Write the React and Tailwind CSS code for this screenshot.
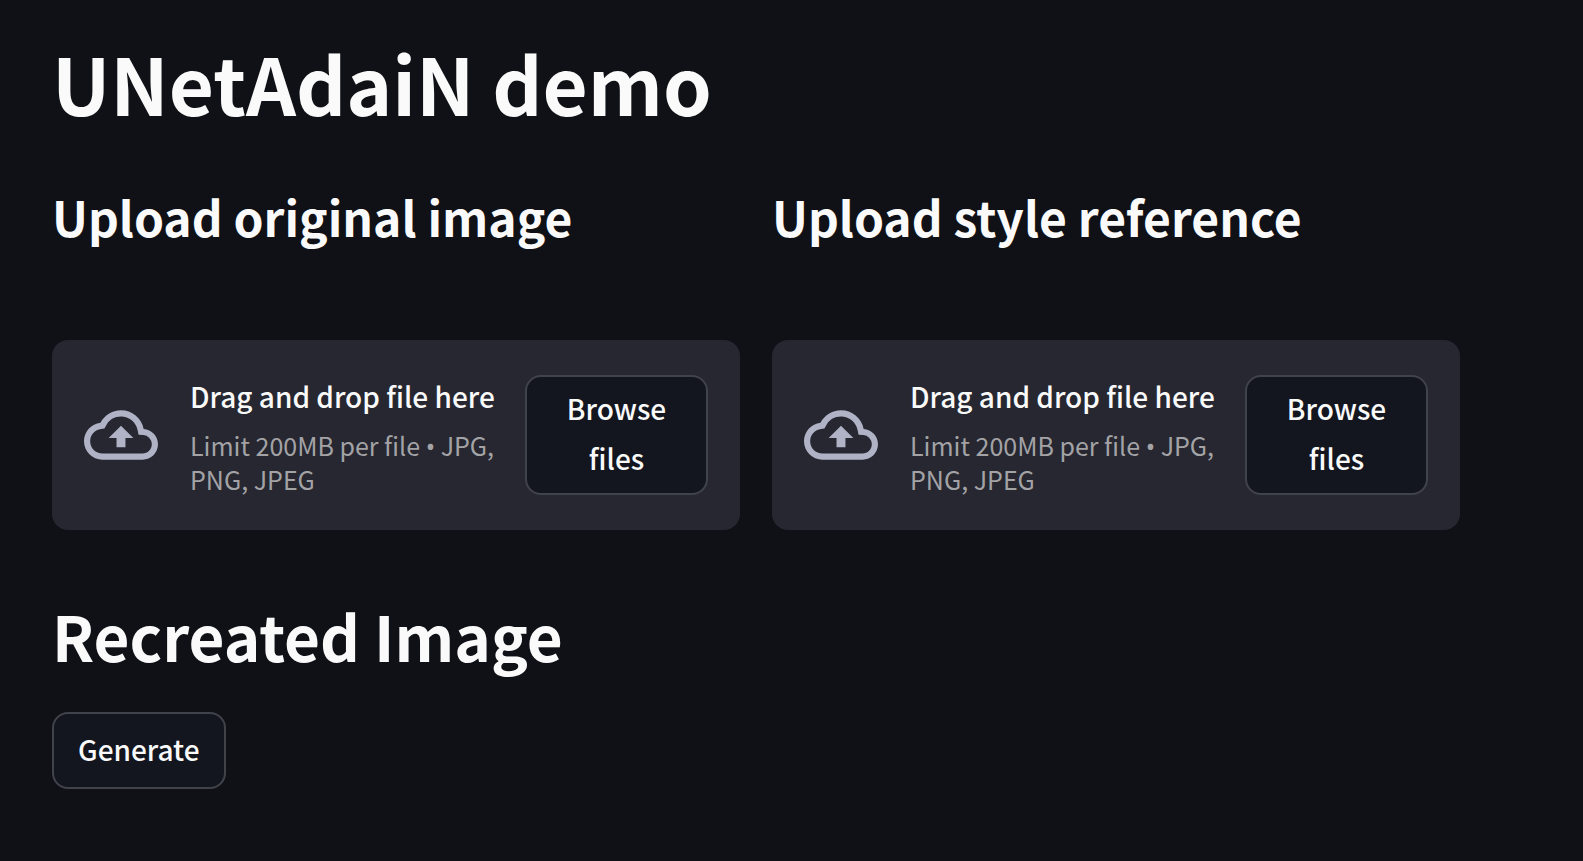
import { useId, useRef } from "react";

function CloudUploadIcon() {
  return (
    <svg viewBox="0 0 24 24" className="size-[74px] shrink-0 fill-[#b0b3c6]" aria-hidden="true">
      <path d="M19.35 10.04A7.49 7.49 0 0012 4C9.11 4 6.6 5.64 5.35 8.04A5.994 5.994 0 000 14c0 3.31 2.69 6 6 6h13c2.76 0 5-2.24 5-5 0-2.64-2.05-4.78-4.65-4.96zM19 18H6c-2.21 0-4-1.79-4-4 0-2.05 1.53-3.76 3.56-3.97l1.07-.11.5-.95A5.469 5.469 0 0112 6c2.62 0 4.88 1.86 5.39 4.43l.3 1.5 1.53.11A2.98 2.98 0 0122 15c0 1.65-1.35 3-3 3zM8 13h2.55v3h2.9v-3H16l-4-4z" />
    </svg>
  );
}

function Uploader({ title }) {
  const input = useRef(null);
  const headingId = useId();
  return (
    <section className="min-w-0 flex-1">
      <h2 id={headingId} className="text-[48px] leading-[60px] font-semibold whitespace-nowrap">
        {title}
      </h2>
      <div className="mt-[94px] flex items-center rounded-2xl bg-[#262730] px-8 py-8">
        <CloudUploadIcon />
        <div className="ml-8 min-w-0 flex-1 pb-[2px]">
          <p className="text-[28px] leading-[48px] font-medium whitespace-nowrap">Drag and drop file here</p>
          <p className="mt-2 text-[25px] leading-[34px] text-[#a3a3a6]">
            Limit 200MB per file <span className="font-['Noto_Sans'] leading-none">•</span> JPG, PNG, JPEG
          </p>
        </div>
        <input
          ref={input}
          type="file"
          accept=".jpg,.png,.jpeg"
          aria-labelledby={headingId}
          className="hidden"
        />
        <button
          type="button"
          onClick={() => input.current.click()}
          className="ml-6 w-[183px] shrink-0 rounded-2xl border-2 border-[#41434b] bg-[#13161f] px-6 pt-[6px] pb-[10px] text-[28px] leading-[50px] font-medium"
        >
          Browse files
        </button>
      </div>
    </section>
  );
}

export default function App() {
  return (
    <main className="min-h-screen bg-[#0f1116] pt-[34px] pr-[123px] pb-[72px] pl-[52px] font-['Noto_Sans_CJK_SC','Noto_Sans',sans-serif] text-[#fafafa]">
      <h1 className="text-[78px] leading-[96px] font-bold">UNetAdaiN demo</h1>
      <div className="mt-[56px] flex gap-8">
        <Uploader title="Upload original image" />
        <Uploader title="Upload style reference" />
      </div>
      <h2 className="mt-[66px] text-[62px] leading-[78px] font-semibold">Recreated Image</h2>
      <button
        type="button"
        className="mt-[38px] rounded-2xl border-2 border-[#41434b] bg-[#13161f] px-6 pt-[10px] pb-[13px] text-[28px] leading-[50px] font-medium"
      >
        Generate
      </button>
    </main>
  );
}
